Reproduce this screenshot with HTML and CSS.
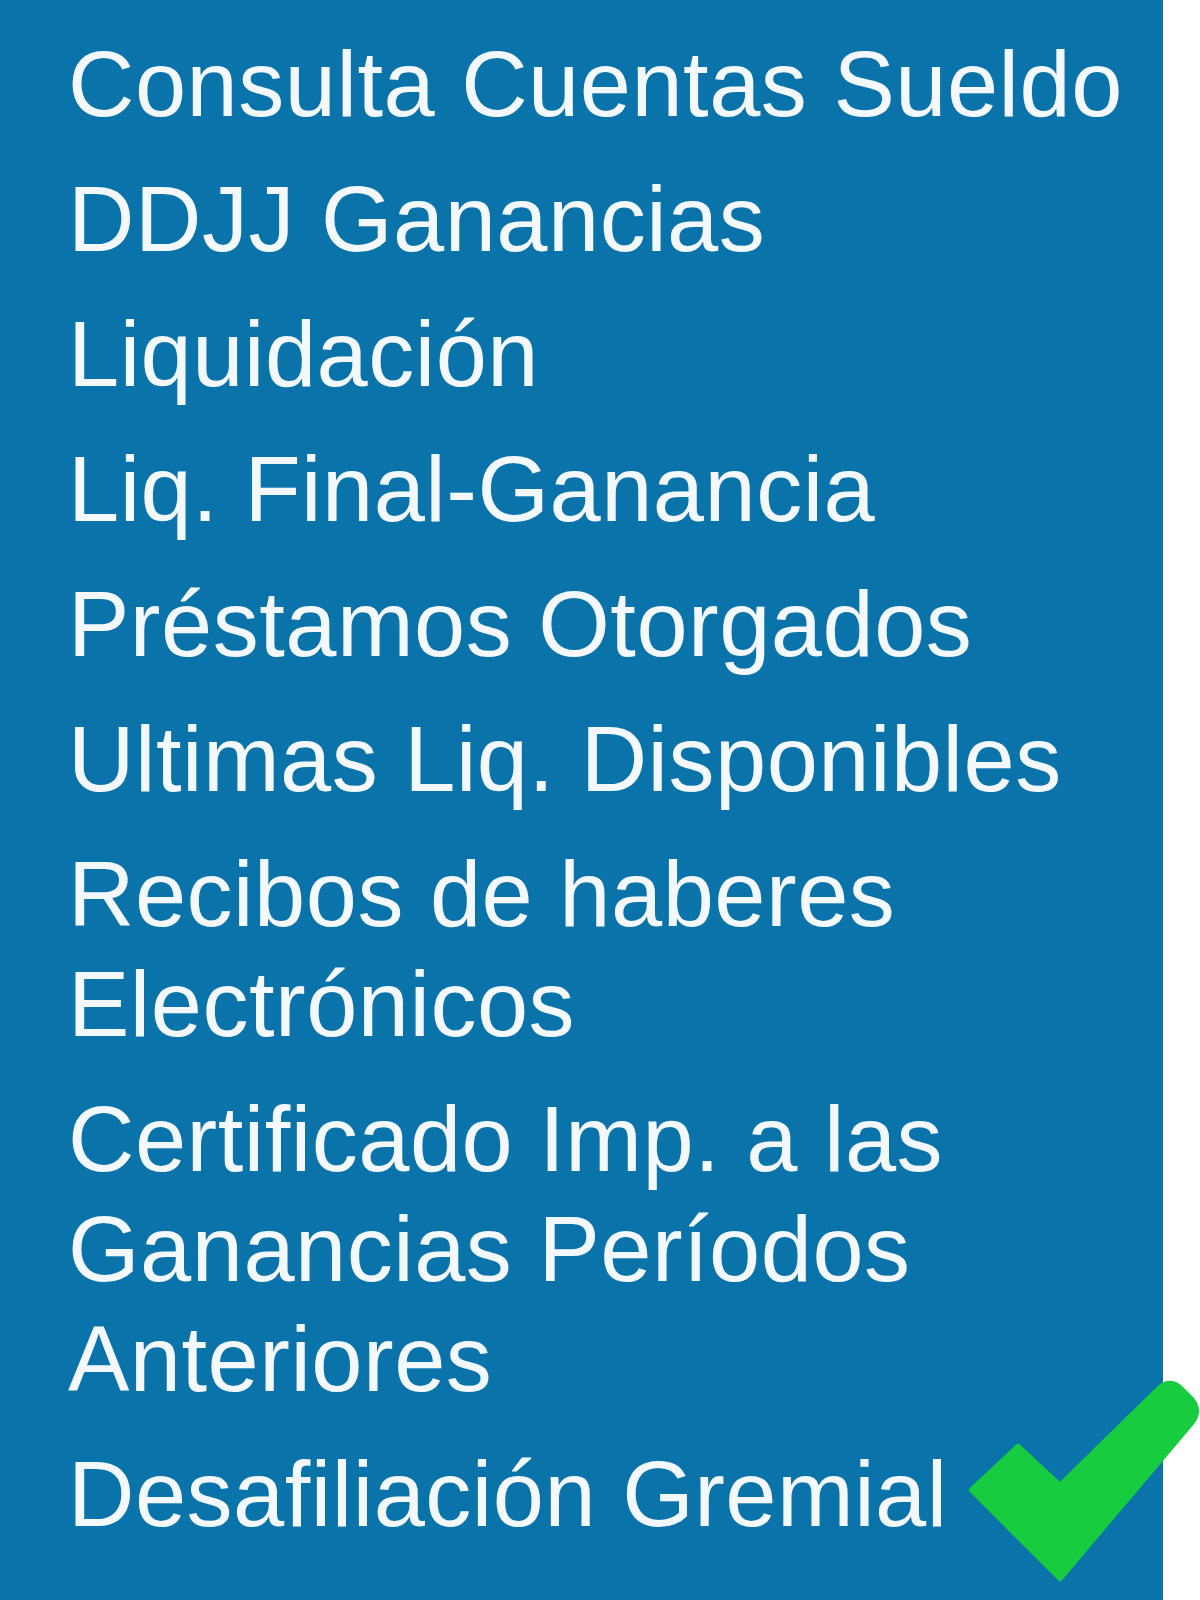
FILE: index.html
```html
<!DOCTYPE html>
<html lang="es">
<head>
<meta charset="utf-8">
<title>Menú</title>
<link rel="stylesheet" href="styles.css">
</head>
<body>
<nav class="panel">
  <ul class="menu">
    <li class="menu-item">Datos personales</li>
    <li class="menu-item">Consulta Cuentas Sueldo</li>
    <li class="menu-item">DDJJ Ganancias</li>
    <li class="menu-item">Liquidación</li>
    <li class="menu-item">Liq. Final-Ganancia</li>
    <li class="menu-item">Préstamos Otorgados</li>
    <li class="menu-item">Ultimas Liq. Disponibles</li>
    <li class="menu-item">Recibos de haberes Electrónicos</li>
    <li class="menu-item">Certificado Imp. a las Ganancias Períodos Anteriores</li>
    <li class="menu-item">Desafiliación Gremial</li>
  </ul>
</nav>
<svg class="check" viewBox="0 0 240 210" width="240" height="210" aria-hidden="true">
  <path d="M12,115 L58,72 L100,111 L199,14 Q210,4 221,14 L231,24 Q241,36 231,48 L100,203 Z" fill="#17cc3f" stroke="#17cc3f" stroke-width="6" stroke-linejoin="round"/>
</svg>
</body>
</html>
```

FILE: styles.css
```css
html, body {
  margin: 0;
  padding: 0;
  background: #ffffff;
}

body {
  width: 1200px;
  height: 1600px;
  overflow: hidden;
  position: relative;
  font-family: "Liberation Sans", Arial, sans-serif;
}

.panel {
  width: 1163px;
  height: 1600px;
  background: #0a73a9;
  box-sizing: border-box;
  padding-left: 68px;
  padding-right: 20px;
  overflow: hidden;
}

.menu {
  list-style: none;
  margin: -106px 0 0 0;
  padding: 0;
  display: flex;
  flex-direction: column;
  gap: 25px;
}

.menu-item {
  font-size: 92px;
  line-height: 110px;
  letter-spacing: 0.5px;
  color: #f3f8fc;
}

.check {
  position: absolute;
  left: 960px;
  top: 1375px;
}
```
